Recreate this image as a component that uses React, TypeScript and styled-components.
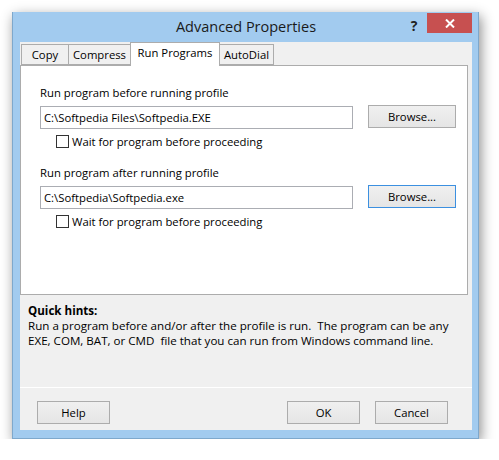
import styled, { createGlobalStyle } from "styled-components";

const GlobalStyle = createGlobalStyle`
  body {
    margin: 0;
    background: #ffffff;
    font-family: "Open Sans", "Noto Sans", sans-serif;
    font-size: 11.3px;
    color: #000000;
  }
`;

const tabs = ["Copy", "Compress", "Run Programs", "AutoDial"];
const tabWidths = [48, 63, 90, 55];

const sections = [
  { label: "Run program before running profile", path: "C:\\Softpedia Files\\Softpedia.EXE", focused: false },
  { label: "Run program after running profile", path: "C:\\Softpedia\\Softpedia.exe", focused: true },
];

export default function App() {
  return (
    <>
      <GlobalStyle />
      <SShell>
        <SWindow>
          <STitleBar>
            <STitle>Advanced Properties</STitle>
            <SHelp>?</SHelp>
            <SClose>
              <svg width="10" height="9" viewBox="0 0 10 9">
                <path d="M1 0.5 L9 8.5 M9 0.5 L1 8.5" stroke="#fff" strokeWidth="2" />
              </svg>
            </SClose>
          </STitleBar>
          <SClient>
            <STabStrip>
              {tabs.map((t, i) => (
                <STab key={t} $active={i === 2} $w={tabWidths[i]}>
                  {t}
                </STab>
              ))}
            </STabStrip>
            <SPanel>
              {sections.map((s) => (
                <SSection key={s.label}>
                  <SLabel>{s.label}</SLabel>
                  <SInputRow>
                    <SInput>{s.path}</SInput>
                    <SButton $w={88} $focused={s.focused}>Browse...</SButton>
                  </SInputRow>
                  <SCheckRow>
                    <SCheckbox />
                    <span>Wait for program before proceeding</span>
                  </SCheckRow>
                </SSection>
              ))}
            </SPanel>
            <SHints>
              <SHintTitle>Quick hints:</SHintTitle>
              <SHintText>
                Run a program before and/or after the profile is run.&nbsp; The program can be any
                <br />
                EXE, COM, BAT, or CMD&nbsp; file that you can run from Windows command line.
              </SHintText>
            </SHints>
            <SButtonBar>
              <SButton $w={73}>Help</SButton>
              <SSpacer />
              <SButton $w={73}>OK</SButton>
              <SButton $w={73}>Cancel</SButton>
            </SButtonBar>
          </SClient>
        </SWindow>
      </SShell>
    </>
  );
}

const SShell = styled.div`
  padding: 12px 0 0 12px;
`;

const SWindow = styled.div`
  width: 467px;
  box-sizing: border-box;
  background: #a2cbef;
  border: 1px solid #7ea8cc;
  border-top: none;
  padding: 0 6px 8px 7px;
  box-shadow: 2px 4px 12px rgba(0, 0, 0, 0.45);
  display: flex;
  flex-direction: column;
`;

const STitleBar = styled.div`
  height: 30px;
  display: flex;
  align-items: flex-start;
`;

const STitle = styled.div`
  flex: 1;
  padding-left: 67px;
  text-align: center;
  font-size: 14.5px;
  line-height: 30px;
  color: #1a1a1a;
`;

const SHelp = styled.div`
  width: 18px;
  margin: 4px 4px 0 0;
  font-weight: bold;
  font-size: 14px;
  color: #222;
  text-align: center;
`;

const SClose = styled.div`
  width: 45px;
  height: 20px;
  margin-top: 1px;
  background: #c75050;
  display: flex;
  align-items: center;
  justify-content: center;
`;

const SClient = styled.div`
  background: #f0f0f0;
  height: 388px;
  display: flex;
  flex-direction: column;
`;

const STabStrip = styled.div`
  height: 23px;
  display: flex;
  align-items: flex-end;
  padding-left: 2px;
`;

const STab = styled.div<{ $active: boolean; $w: number }>`
  width: ${(p) => p.$w}px;
  box-sizing: border-box;
  height: ${(p) => (p.$active ? 24 : 21)}px;
  margin-bottom: ${(p) => (p.$active ? -1 : 0)}px;
  border: 1px solid #acacac;
  border-bottom: ${(p) => (p.$active ? "none" : "1px solid #acacac")};
  margin-left: -1px;
  background: ${(p) => (p.$active ? "#ffffff" : "#f0f0f0")};
  position: relative;
  z-index: ${(p) => (p.$active ? 1 : 0)};
  text-align: center;
  line-height: ${(p) => (p.$active ? 20 : 19)}px;
`;

const SPanel = styled.div`
  height: 230px;
  box-sizing: border-box;
  margin-right: 4px;
  border: 1px solid #acacac;
  background: #ffffff;
  padding: 19px 0 0 19px;
  display: flex;
  flex-direction: column;
  gap: 17px;
`;

const SSection = styled.div`
  display: flex;
  flex-direction: column;
`;

const SLabel = styled.div`
  line-height: 16px;
  margin-bottom: 4px;
`;

const SInputRow = styled.div`
  display: flex;
  align-items: flex-start;
  gap: 15px;
  height: 24px;
`;

const SInput = styled.div`
  width: 313px;
  height: 23px;
  box-sizing: border-box;
  margin-top: 1px;
  border: 1px solid #abadb3;
  padding-left: 3px;
  line-height: 21px;
  white-space: nowrap;
`;

const SButton = styled.div<{ $w: number; $focused?: boolean }>`
  width: ${(p) => p.$w}px;
  height: 23px;
  box-sizing: border-box;
  border: 1px solid ${(p) => (p.$focused ? "#3c90e0" : "#acacac")};
  background: linear-gradient(#f0f0f0, #e5e5e5);
  text-align: center;
  line-height: 21px;
`;

const SCheckRow = styled.div`
  margin-top: 6px;
  padding-left: 16px;
  display: flex;
  align-items: center;
  gap: 3px;
  height: 13px;
`;

const SCheckbox = styled.div`
  width: 13px;
  height: 13px;
  box-sizing: border-box;
  border: 1px solid #333333;
  background: #ffffff;
`;

const SHints = styled.div`
  height: 92px;
  box-sizing: border-box;
  padding: 8px 0 0 8px;
  font-size: 11.6px;
  line-height: 15px;
`;

const SHintTitle = styled.div`
  font-weight: bold;
`;

const SHintText = styled.div``;

const SButtonBar = styled.div`
  flex: 1;
  border-top: 1px solid #ffffff;
  display: flex;
  align-items: flex-start;
  gap: 15px;
  padding: 13px 24px 0 17px;
`;

const SSpacer = styled.div`
  flex: 1;
`;
